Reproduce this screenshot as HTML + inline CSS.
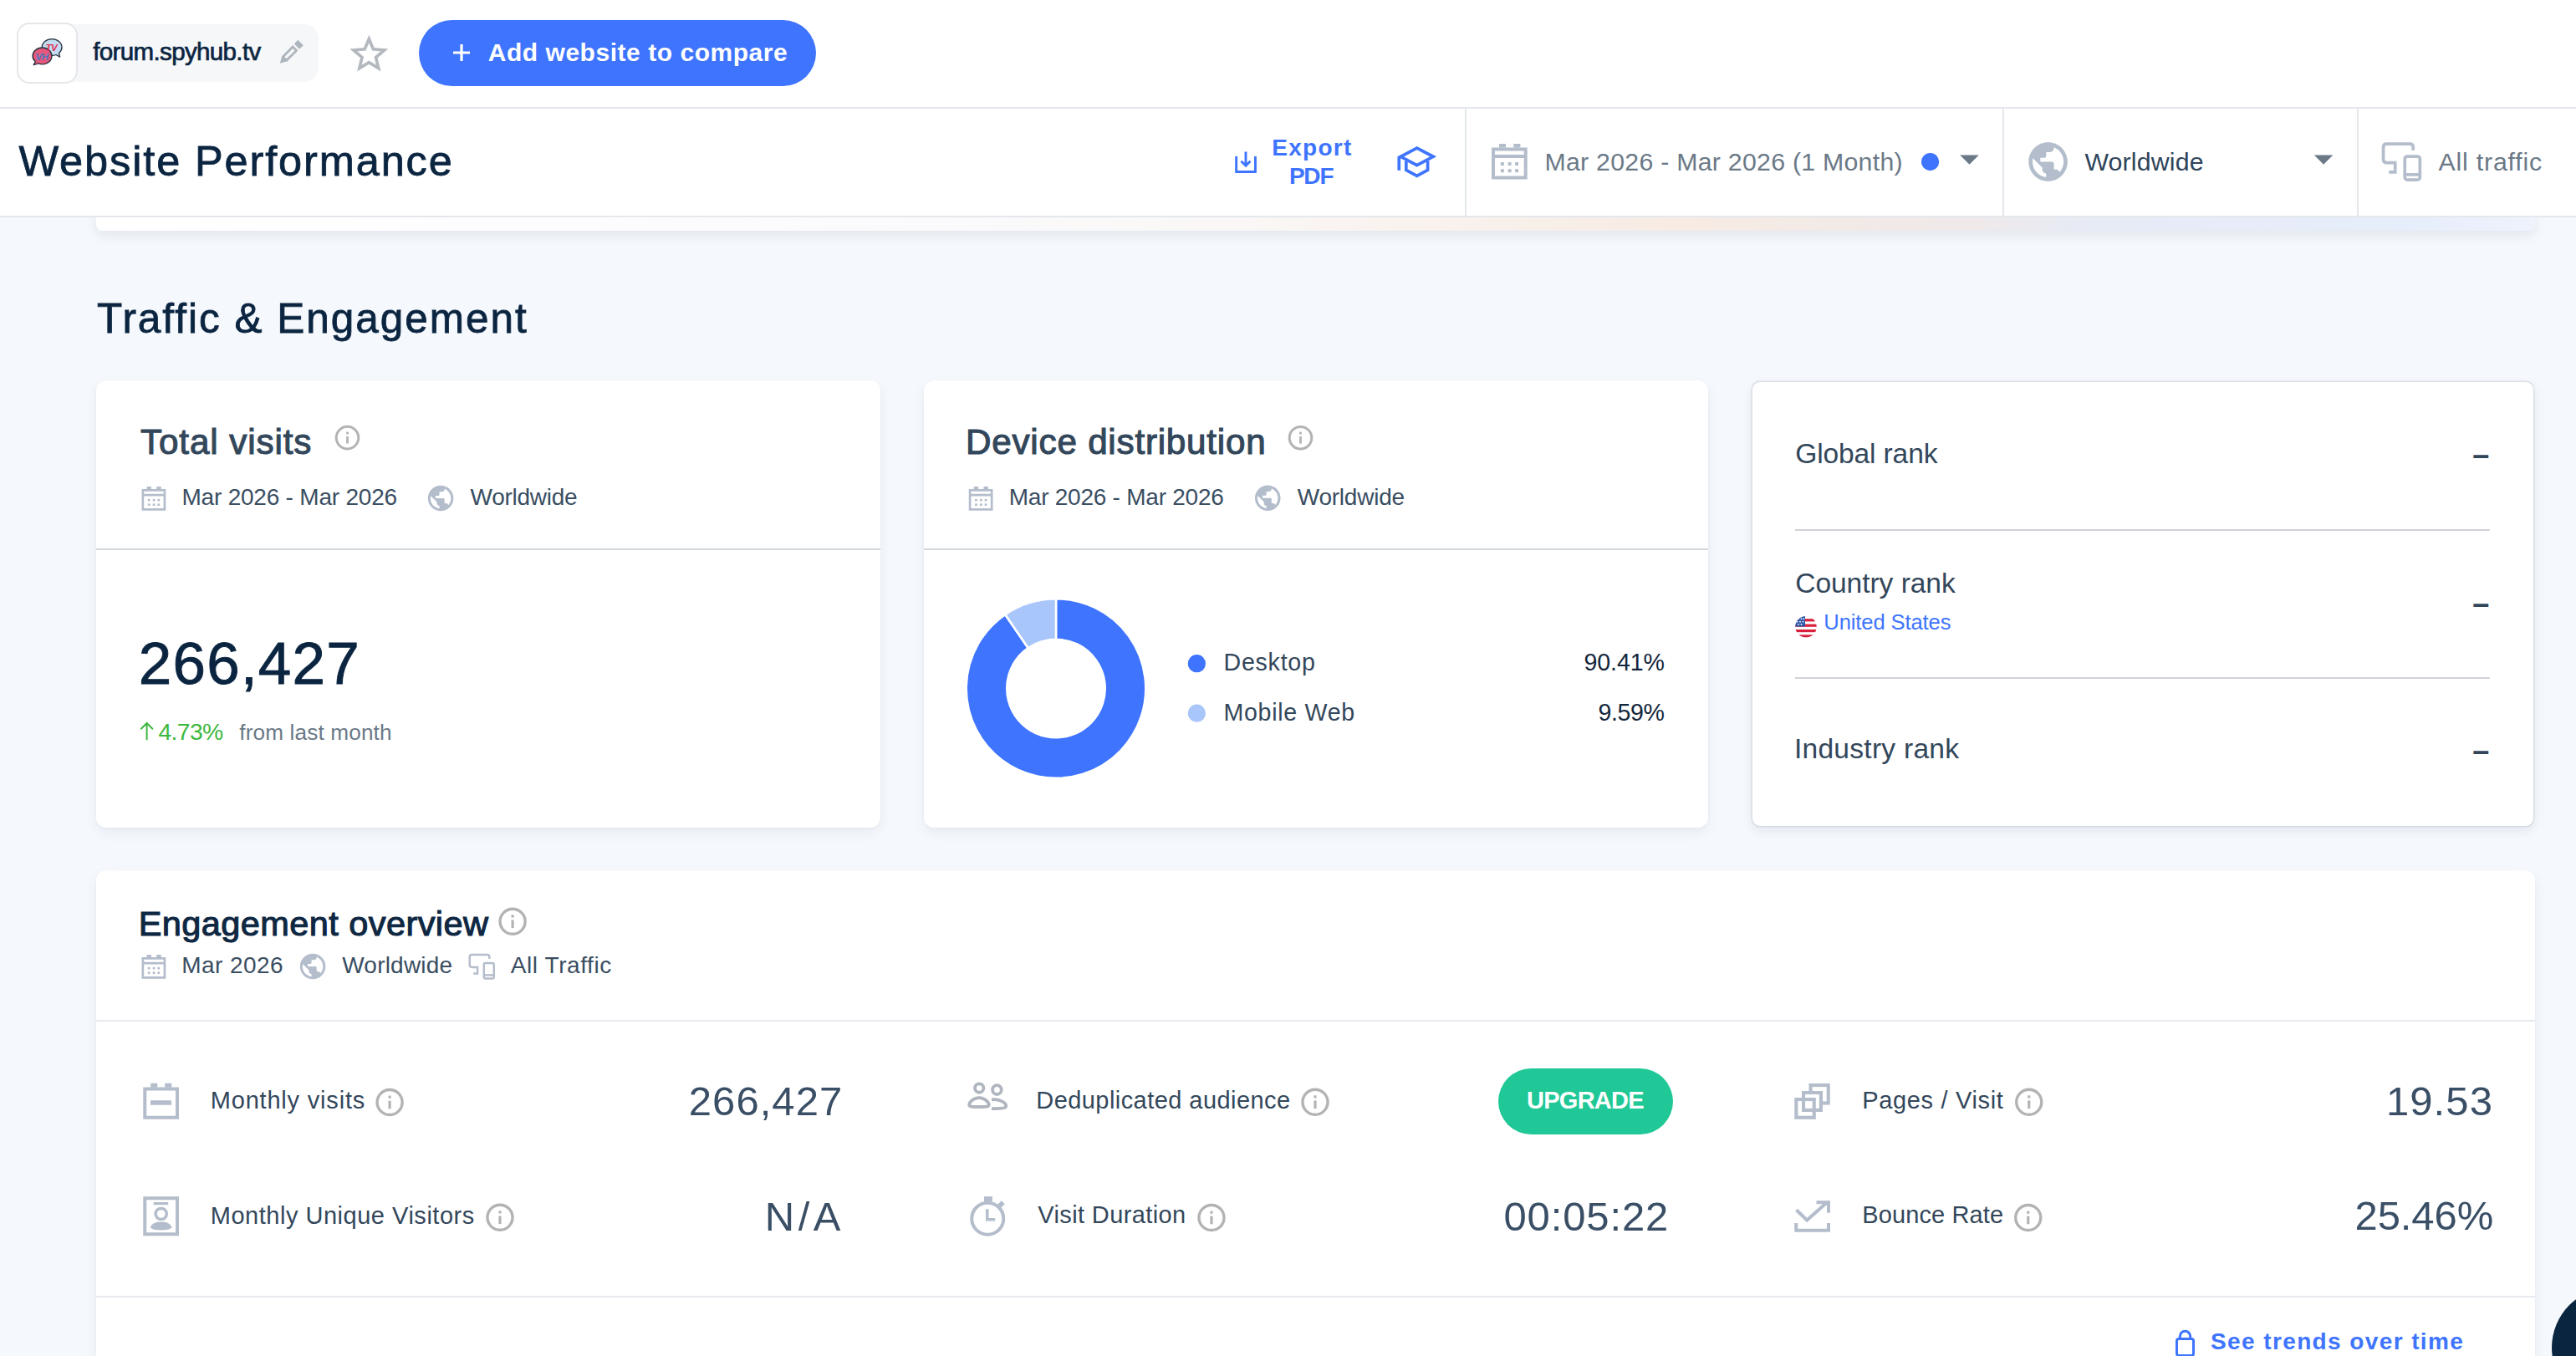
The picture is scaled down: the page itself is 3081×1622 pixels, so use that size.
<!DOCTYPE html>
<html lang="en"><head><meta charset="utf-8"><title>Website Performance - forum.spyhub.tv</title>
<style>
html,body{margin:0;padding:0;}
body{width:3081px;height:1622px;overflow:hidden;position:relative;background:#f5f8fc;font-family:"Liberation Sans",sans-serif;}
.t{position:absolute;white-space:nowrap;line-height:1;font-family:"Liberation Sans",sans-serif;}
.a{position:absolute;}
.card{position:absolute;background:#fff;border-radius:12px;box-shadow:0 6px 16px rgba(20,40,80,0.06),0 1px 3px rgba(20,40,80,0.04);}
svg{position:absolute;overflow:visible;}

</style></head>
<body>
<!-- top bars -->
<div class="a" style="left:0;top:0;width:3081px;height:128px;background:#fff;border-bottom:2px solid #e4e7eb;"></div>
<div class="a" style="left:115px;top:250px;width:2917px;height:26px;background:linear-gradient(90deg,#fff 0%,#fbfbfe 30%,#faf7f6 47%,#f7ebe3 65%,#efe9ea 77%,#e6ebf6 82%,#e6eefb 95%,#eef3fc 100%);border-radius:0 0 8px 8px;box-shadow:0 6px 14px rgba(20,40,80,0.08);"></div>
<div class="a" style="left:0;top:130px;width:3081px;height:128px;background:#fff;border-bottom:2px solid #e4e7eb;"></div>
<div class="a" style="left:1752px;top:130px;width:2px;height:128px;background:#e4e7eb;"></div>
<div class="a" style="left:2395px;top:130px;width:2px;height:128px;background:#e4e7eb;"></div>
<div class="a" style="left:2819px;top:130px;width:2px;height:128px;background:#e4e7eb;"></div>
<!-- site pill -->
<div class="a" style="left:21px;top:29.4px;width:360.2px;height:68.4px;background:#f6f7f9;border-radius:17px;"></div>
<div class="a" style="left:20.3px;top:27.2px;width:68.3px;height:68.6px;background:#fff;border:2px solid #e5e7ea;border-radius:15px;"></div>
<!-- add button -->
<div class="a" style="left:500.75px;top:23.75px;width:475.5px;height:78.75px;background:#3e74fe;border-radius:40px;"></div>
<!-- cards -->
<div class="card" style="left:114.5px;top:454.5px;width:938.5px;height:535px;"></div>
<div class="a" style="left:114.5px;top:656px;width:938.5px;height:2px;background:#d3d8de;"></div>
<div class="card" style="left:1104.5px;top:454.5px;width:938.5px;height:535px;"></div>
<div class="a" style="left:1104.5px;top:656px;width:938.5px;height:2px;background:#d3d8de;"></div>
<div class="a" style="left:2095.9px;top:457px;width:934.4px;height:531px;background:#fff;border-radius:9px;box-shadow:0 0 0 1.5px rgba(190,198,210,0.45),0 5px 14px rgba(20,40,80,0.09);"></div>
<div class="a" style="left:2147.2px;top:632.8px;width:830.8px;height:2px;background:#cfd3d8;"></div>
<div class="a" style="left:2147.2px;top:809.8px;width:830.8px;height:2px;background:#cfd3d8;"></div>
<div class="card" style="left:114.5px;top:1040.8px;width:2917.8px;height:640px;"></div>
<div class="a" style="left:114.5px;top:1219.7px;width:2917.8px;height:2px;background:#e6e9ed;"></div>
<div class="a" style="left:114.5px;top:1549.7px;width:2917.8px;height:2px;background:#e6e9ed;"></div>
<!-- upgrade -->
<div class="a" style="left:1791.75px;top:1278px;width:209px;height:78.75px;background:#1fc896;border-radius:40px;"></div>
<!-- chat bubble -->
<div class="a" style="left:3051.5px;top:1540px;width:144px;height:144px;background:#0a2540;border-radius:50%;"></div>

<svg width="3081" height="1622" viewBox="0 0 3081 1622" style="left:0;top:0;">

<!-- favicon -->
<g stroke="#24303f" stroke-width="1.300" stroke-linejoin="round">
  <path d="M62.100 46.700c6.600 0 11.900 4.400 11.900 9.900 0 2.700-1.300 5.100-3.400 6.900l1 4.600-4.600-2.600c-1.500.600-3.200.900-4.900.900-6.600 0-11.900-4.300-11.900-9.800s5.300-9.900 11.900-9.900z" fill="#c4dcef"/>
  <path d="M50.500 57c6.400 0 11.500 4.400 11.500 9.900s-5.100 9.900-11.500 9.900c-1.600 0-3.100-.300-4.500-.800l-5.800 1.700 2.100-4.100c-2-1.700-3.300-4.100-3.300-6.700 0-5.500 5.100-9.900 11.500-9.900z" fill="#e5587b"/>
</g>
<text x="54.500" y="61" font-family="Liberation Sans, sans-serif" font-weight="700" font-style="italic" font-size="11.500" fill="#e0315a" letter-spacing="-0.5">TV</text>
<text x="42.500" y="71.500" font-family="Liberation Sans, sans-serif" font-weight="700" font-style="italic" font-size="11.500" fill="#4a78c4" letter-spacing="-0.5">VH</text>

<!-- pencil -->
<g transform="translate(334.800,75.800) rotate(-45)" fill="#aeb6bd">
  <path d="M0 0L8 -4.500V4.500Z"/>
  <path fill-rule="evenodd" d="M7 -4.500H26.200V4.500H7Z M9.500 -1.700H23.400V1.700H9.500Z"/>
  <rect x="28.600" y="-4.500" width="6.400" height="9"/>
</g>
<!-- star -->
<path d="M441.30 46.50L446.41 58.86L459.75 59.91L449.57 68.59L452.70 81.59L441.30 74.60L429.90 81.59L433.03 68.59L422.85 59.91L436.19 58.86Z" fill="none" stroke="#b3b9bf" stroke-width="3.7" stroke-linejoin="miter" stroke-miterlimit="10"/>
<!-- plus -->
<path d="M542 63h20M552 53v20" stroke="#fff" stroke-width="3.200" fill="none"/>

<!-- export icon -->
<g stroke="#3e74fe" stroke-width="2.900" fill="none">
  <path d="M1478.650 187v18.550h22.800V187"/>
  <path d="M1490 181.400v17M1484.500 192.700l5.500 5.600 5.500-5.600"/>
</g>
<!-- grad cap -->
<g stroke="#3e74fe" stroke-width="3.700" fill="none" stroke-linejoin="miter">
  <path d="M1675.200 187.300L1694.700 177.100 1714.200 187.300 1694.700 197.700Z"/>
  <path d="M1681.800 192.500v11l12.900 6.800 12.900-6.800v-11"/>
  <path d="M1673.300 187.500v16.300"/>
</g>
<!-- header calendar -->
<g transform="translate(1784,172)" fill="#b4bdcb"><g>
    <path fill-rule="evenodd" d="M0 4.500h42.700v38.100H0z M4 8.500v4.500h34.700v-4.500z M4 17v21.600h34.700V17z"/>
    <rect x="9" y="0" width="8" height="4.600"/><rect x="26.300" y="0" width="8.100" height="4.600"/>
    <rect x="10.900" y="22" width="4" height="4"/><rect x="19.600" y="22" width="4" height="4"/><rect x="28.100" y="22" width="4" height="4"/>
    <rect x="10.900" y="30.200" width="4" height="4"/><rect x="19.600" y="30.200" width="4" height="4"/><rect x="28.100" y="30.200" width="4" height="4"/>
  </g></g>
<circle cx="2308.600" cy="193.600" r="10.600" fill="#3e74fe"/>
<g transform="translate(2344.250,185.500)" fill="#6b7987"><path d="M0 0h22.500l-11.250 11.250z"/></g>
<g transform="translate(2421.700,165.600) scale(2.325)" fill="#b4bdcb"><path d="M12 2C6.480 2 2 6.480 2 12s4.480 10 10 10 10-4.480 10-10S17.520 2 12 2zm-1 17.930c-3.950-.490-7-3.850-7-7.930 0-.620.080-1.210.210-1.790L9 15v1c0 1.100.900 2 2 2v1.930zm6.900-2.540c-.260-.810-1-1.390-1.900-1.390h-1v-3c0-.550-.450-1-1-1H8v-2h2c.550 0 1-.450 1-1V7h2c1.100 0 2-.900 2-2v-.410c2.930 1.190 5 4.060 5 7.410 0 2.080-.800 3.970-2.100 5.390z"/></g>
<g transform="translate(2767.800,185.500)" fill="#6b7987"><path d="M0 0h22.500l-11.250 11.250z"/></g>
<g transform="translate(2848.700,170.200)" stroke="#b4bdcb"><g fill="none" stroke-width="3.700">
    <path d="M37.500 9.500V5.800Q37.500 1.850 33.500 1.850H5.800Q1.850 1.850 1.850 5.800V20.500Q1.850 24.400 5.800 24.400H16V35.700H8.600"/>
    <rect x="27.550" y="16.850" width="18.100" height="28.100" rx="3"/>
    <path d="M27.500 38.700H45.600"/>
  </g></g>

<!-- card1 -->
<g transform="translate(415.500,523.600)"><g>
    <circle cx="0" cy="0" r="13.300" fill="none" stroke="#b2b3b5" stroke-width="3"/>
    <rect x="-1.400" y="-1.600" width="2.800" height="8.500" fill="#b2b3b5"/><rect x="-1.400" y="-7" width="2.800" height="2.800" fill="#b2b3b5"/>
  </g></g>
<g transform="translate(169.500,582) scale(0.674)" fill="#b4bdcb"><g>
    <path fill-rule="evenodd" d="M0 4.500h42.700v38.100H0z M4 8.500v4.500h34.700v-4.500z M4 17v21.600h34.700V17z"/>
    <rect x="9" y="0" width="8" height="4.600"/><rect x="26.300" y="0" width="8.100" height="4.600"/>
    <rect x="10.900" y="22" width="4" height="4"/><rect x="19.600" y="22" width="4" height="4"/><rect x="28.100" y="22" width="4" height="4"/>
    <rect x="10.900" y="30.200" width="4" height="4"/><rect x="19.600" y="30.200" width="4" height="4"/><rect x="28.100" y="30.200" width="4" height="4"/>
  </g></g>
<g transform="translate(508.740,577.640) scale(1.530)" fill="#b4bdcb"><path d="M12 2C6.480 2 2 6.480 2 12s4.480 10 10 10 10-4.480 10-10S17.520 2 12 2zm-1 17.930c-3.950-.490-7-3.850-7-7.930 0-.620.080-1.210.210-1.790L9 15v1c0 1.100.900 2 2 2v1.930zm6.900-2.540c-.260-.810-1-1.390-1.900-1.390h-1v-3c0-.550-.450-1-1-1H8v-2h2c.550 0 1-.450 1-1V7h2c1.100 0 2-.900 2-2v-.410c2.930 1.190 5 4.060 5 7.410 0 2.080-.800 3.970-2.100 5.390z"/></g>
<path d="M175.600 885.300V865M168.300 872.300l7.300-7.300 7.300 7.300" stroke="#3db83e" stroke-width="2" fill="none"/>

<!-- card2 -->
<g transform="translate(1555.500,523.700)"><g>
    <circle cx="0" cy="0" r="13.300" fill="none" stroke="#b2b3b5" stroke-width="3"/>
    <rect x="-1.400" y="-1.600" width="2.800" height="8.500" fill="#b2b3b5"/><rect x="-1.400" y="-7" width="2.800" height="2.800" fill="#b2b3b5"/>
  </g></g>
<g transform="translate(1158.750,582) scale(0.674)" fill="#b4bdcb"><g>
    <path fill-rule="evenodd" d="M0 4.500h42.700v38.100H0z M4 8.500v4.500h34.700v-4.500z M4 17v21.600h34.700V17z"/>
    <rect x="9" y="0" width="8" height="4.600"/><rect x="26.300" y="0" width="8.100" height="4.600"/>
    <rect x="10.900" y="22" width="4" height="4"/><rect x="19.600" y="22" width="4" height="4"/><rect x="28.100" y="22" width="4" height="4"/>
    <rect x="10.900" y="30.200" width="4" height="4"/><rect x="19.600" y="30.200" width="4" height="4"/><rect x="28.100" y="30.200" width="4" height="4"/>
  </g></g>
<g transform="translate(1497.890,577.400) scale(1.530)" fill="#b4bdcb"><path d="M12 2C6.480 2 2 6.480 2 12s4.480 10 10 10 10-4.480 10-10S17.520 2 12 2zm-1 17.930c-3.950-.490-7-3.850-7-7.930 0-.620.080-1.210.210-1.790L9 15v1c0 1.100.900 2 2 2v1.930zm6.900-2.540c-.260-.810-1-1.390-1.900-1.390h-1v-3c0-.550-.450-1-1-1H8v-2h2c.550 0 1-.450 1-1V7h2c1.100 0 2-.900 2-2v-.410c2.930 1.190 5 4.060 5 7.410 0 2.080-.800 3.970-2.100 5.390z"/></g>
<path d="M1263.00 716.20A107.3 107.3 0 1 1 1202.19 735.10L1229.73 775.14A58.7 58.7 0 1 0 1263.00 764.80Z" fill="#3e74fe" stroke="#fff" stroke-width="2.6" stroke-linejoin="round"/>
<path d="M1202.19 735.10A107.3 107.3 0 0 1 1263.00 716.20L1263.00 764.80A58.7 58.7 0 0 0 1229.73 775.14Z" fill="#a9c6fb" stroke="#fff" stroke-width="2.6" stroke-linejoin="round"/>
<circle cx="1431.400" cy="793.700" r="10.600" fill="#3e74fe"/>
<circle cx="1431.400" cy="853.200" r="10.600" fill="#a9c6fb"/>

<!-- flag -->
<g transform="translate(2160,749.700)">
  <clipPath id="fc"><circle cx="0" cy="0" r="12.700"/></clipPath>
  <g clip-path="url(#fc)">
    <rect x="-13" y="-13" width="26" height="26" fill="#fff"/>
    <rect x="-13" y="-9.500" width="26" height="3.200" fill="#d8213c"/>
    <rect x="-13" y="-3.100" width="26" height="3.200" fill="#d8213c"/>
    <rect x="-13" y="3.300" width="26" height="3.200" fill="#d8213c"/>
    <rect x="-13" y="9.600" width="26" height="3.400" fill="#d8213c"/>
    <rect x="-13" y="-13" width="12" height="12.800" fill="#2f57a8"/>
    <g fill="#fff"><circle cx="-9" cy="-9.500" r="0.900"/><circle cx="-5.500" cy="-9.500" r="0.900"/><circle cx="-2.500" cy="-9.500" r="0.900"/><circle cx="-10.500" cy="-6" r="0.900"/><circle cx="-7" cy="-6" r="0.900"/><circle cx="-3.500" cy="-6" r="0.900"/><circle cx="-9" cy="-2.800" r="0.900"/><circle cx="-5.500" cy="-2.800" r="0.900"/></g>
  </g>
</g>

<!-- engagement header -->
<g transform="translate(613.100,1102.250) scale(1.130)"><g>
    <circle cx="0" cy="0" r="13.300" fill="none" stroke="#b2b3b5" stroke-width="3"/>
    <rect x="-1.400" y="-1.600" width="2.800" height="8.500" fill="#b2b3b5"/><rect x="-1.400" y="-7" width="2.800" height="2.800" fill="#b2b3b5"/>
  </g></g>
<g transform="translate(169.500,1142) scale(0.674)" fill="#b4bdcb"><g>
    <path fill-rule="evenodd" d="M0 4.500h42.700v38.100H0z M4 8.500v4.500h34.700v-4.500z M4 17v21.600h34.700V17z"/>
    <rect x="9" y="0" width="8" height="4.600"/><rect x="26.300" y="0" width="8.100" height="4.600"/>
    <rect x="10.900" y="22" width="4" height="4"/><rect x="19.600" y="22" width="4" height="4"/><rect x="28.100" y="22" width="4" height="4"/>
    <rect x="10.900" y="30.200" width="4" height="4"/><rect x="19.600" y="30.200" width="4" height="4"/><rect x="28.100" y="30.200" width="4" height="4"/>
  </g></g>
<g transform="translate(355.740,1137.640) scale(1.530)" fill="#b4bdcb"><path d="M12 2C6.480 2 2 6.480 2 12s4.480 10 10 10 10-4.480 10-10S17.520 2 12 2zm-1 17.930c-3.950-.490-7-3.850-7-7.930 0-.620.080-1.210.210-1.790L9 15v1c0 1.100.900 2 2 2v1.930zm6.900-2.540c-.260-.810-1-1.390-1.900-1.390h-1v-3c0-.550-.450-1-1-1H8v-2h2c.550 0 1-.450 1-1V7h2c1.100 0 2-.900 2-2v-.410c2.930 1.190 5 4.060 5 7.410 0 2.080-.800 3.970-2.100 5.390z"/></g>
<g transform="translate(560.500,1140.750) scale(0.663)" stroke="#b4bdcb"><g fill="none" stroke-width="3.700">
    <path d="M37.500 9.500V5.800Q37.500 1.850 33.500 1.850H5.800Q1.850 1.850 1.850 5.800V20.500Q1.850 24.400 5.800 24.400H16V35.700H8.600"/>
    <rect x="27.550" y="16.850" width="18.100" height="28.100" rx="3"/>
    <path d="M27.500 38.700H45.600"/>
  </g></g>

<!-- row icons -->
<g fill="none" stroke="#b4bdcb" stroke-width="4">
  <!-- monthly visits -->
  <rect x="173.250" y="1302.500" width="38.750" height="34.250"/>
  <path d="M180 1319h25" stroke-width="5.500"/>
  <path d="M184.250 1295.750v5M201.250 1295.750v5" stroke-width="8"/>
  <!-- unique visitors -->
  <rect x="173.250" y="1433.250" width="38.750" height="43"/>
  <path d="M183.750 1439.600h17.500" stroke-width="3.200"/>
  <circle cx="192.700" cy="1452" r="6.600" stroke-width="3.500"/>
  <path d="M181.500 1467.800c1.500-3.300 5.500-4.800 11.200-4.800s9.700 1.500 11.200 4.800c-2 1.500-6 2.200-11.200 2.200s-9.200-.700-11.200-2.200z" stroke-width="3" fill="#b4bdcb"/>
  <!-- pages -->
  <rect x="2165.550" y="1298.050" width="21.200" height="21.400" stroke-width="4.100"/>
  <rect x="2157.050" y="1307.050" width="20.900" height="20.900" stroke-width="4.100" fill="#fff"/>
  <rect x="2148.350" y="1315.050" width="21.400" height="21.700" stroke-width="4.100"/>
  <!-- bounce -->
  <path d="M2148.250 1463v8.750h38.750V1463"/>
  <path d="M2148.500 1447.200l12.700 12.300 24.300-21.500" />
  <path d="M2172.500 1438.250h14.500v12.500"/>
</g>
<!-- people -->
<g fill="none" stroke="#b0b6bf" stroke-width="3.800">
  <circle cx="1171.200" cy="1301.600" r="5.200"/>
  <circle cx="1192.400" cy="1303.600" r="5.400"/>
  <path d="M1171 1313.200C1164 1313.200 1159.200 1318.500 1159.200 1321.800C1159.200 1323.600 1162 1324 1171 1324C1180 1324 1182.800 1323.600 1182.800 1321.800C1182.800 1318.500 1178 1313.200 1171 1313.200Z"/>
  <path d="M1186 1315.300C1196 1314.500 1203.300 1319 1203.300 1323C1203.300 1325.500 1199 1326 1186 1326.200"/>
</g>
<!-- clock -->
<g fill="none" stroke="#b4bdcb" stroke-width="4">
  <circle cx="1181.250" cy="1457.700" r="19"/>
  <path d="M1177 1434.200h10" stroke-width="6"/>
  <path d="M1195.500 1438.500l4 4" stroke-width="6.500"/>
  <path d="M1180.750 1446.250v12.500h9.500" stroke-width="3.500"/>
</g>
<!-- info icons rows -->
<g transform="translate(466.100,1318.500) scale(1.130)"><g>
    <circle cx="0" cy="0" r="13.300" fill="none" stroke="#b2b3b5" stroke-width="3"/>
    <rect x="-1.400" y="-1.600" width="2.800" height="8.500" fill="#b2b3b5"/><rect x="-1.400" y="-7" width="2.800" height="2.800" fill="#b2b3b5"/>
  </g></g>
<g transform="translate(598,1456.250) scale(1.130)"><g>
    <circle cx="0" cy="0" r="13.300" fill="none" stroke="#b2b3b5" stroke-width="3"/>
    <rect x="-1.400" y="-1.600" width="2.800" height="8.500" fill="#b2b3b5"/><rect x="-1.400" y="-7" width="2.800" height="2.800" fill="#b2b3b5"/>
  </g></g>
<g transform="translate(1573,1318.250) scale(1.130)"><g>
    <circle cx="0" cy="0" r="13.300" fill="none" stroke="#b2b3b5" stroke-width="3"/>
    <rect x="-1.400" y="-1.600" width="2.800" height="8.500" fill="#b2b3b5"/><rect x="-1.400" y="-7" width="2.800" height="2.800" fill="#b2b3b5"/>
  </g></g>
<g transform="translate(1449,1456.500) scale(1.130)"><g>
    <circle cx="0" cy="0" r="13.300" fill="none" stroke="#b2b3b5" stroke-width="3"/>
    <rect x="-1.400" y="-1.600" width="2.800" height="8.500" fill="#b2b3b5"/><rect x="-1.400" y="-7" width="2.800" height="2.800" fill="#b2b3b5"/>
  </g></g>
<g transform="translate(2426.750,1318.250) scale(1.130)"><g>
    <circle cx="0" cy="0" r="13.300" fill="none" stroke="#b2b3b5" stroke-width="3"/>
    <rect x="-1.400" y="-1.600" width="2.800" height="8.500" fill="#b2b3b5"/><rect x="-1.400" y="-7" width="2.800" height="2.800" fill="#b2b3b5"/>
  </g></g>
<g transform="translate(2425.750,1456.500) scale(1.130)"><g>
    <circle cx="0" cy="0" r="13.300" fill="none" stroke="#b2b3b5" stroke-width="3"/>
    <rect x="-1.400" y="-1.600" width="2.800" height="8.500" fill="#b2b3b5"/><rect x="-1.400" y="-7" width="2.800" height="2.800" fill="#b2b3b5"/>
  </g></g>
<!-- lock -->
<g fill="none" stroke="#3e74fe" stroke-width="3">
  <rect x="2603.500" y="1601.500" width="20" height="20" rx="2.500"/>
  <path d="M2607.300 1601.500v-3a6.200 6.200 0 0 1 12.400 0v3"/>
</g>
</svg>

<div class="t" style="left:111.25px;top:47.02px;font-size:29.5px;color:#0b2541;letter-spacing:-0.634px;-webkit-text-stroke:0.7px #0b2541;">forum.spyhub.tv</div>
<div class="t" style="left:583.75px;top:48.00px;font-size:30px;color:#ffffff;letter-spacing:0.534px;font-weight:700;">Add website to compare</div>
<div class="t" style="left:22.50px;top:168.49px;font-size:50.5px;color:#0b2541;letter-spacing:1.872px;-webkit-text-stroke:0.8px #0b2541;">Website Performance</div>
<div class="t" style="left:1521.30px;top:162.69px;font-size:28px;color:#3e74fe;letter-spacing:1.270px;font-weight:700;">Export</div>
<div class="t" style="left:1541.90px;top:196.79px;font-size:28px;color:#3e74fe;letter-spacing:-1.198px;font-weight:700;">PDF</div>
<div class="t" style="left:1847.50px;top:178.84px;font-size:30.3px;color:#6b7987;letter-spacing:0.254px;">Mar 2026 - Mar 2026 (1 Month)</div>
<div class="t" style="left:2493.40px;top:178.54px;font-size:30.3px;color:#2f4459;letter-spacing:0.159px;">Worldwide</div>
<div class="t" style="left:2916.50px;top:178.54px;font-size:30.3px;color:#6b7987;letter-spacing:0.804px;">All traffic</div>
<div class="t" style="left:116.00px;top:356.34px;font-size:49.5px;color:#0b2541;letter-spacing:1.987px;-webkit-text-stroke:0.8px #0b2541;">Traffic &amp; Engagement</div>
<div class="t" style="left:168.00px;top:507.67px;font-size:42.2px;color:#33475b;letter-spacing:0.888px;-webkit-text-stroke:1.1px #33475b;">Total visits</div>
<div class="t" style="left:217.50px;top:581.29px;font-size:28px;color:#3a4e62;letter-spacing:-0.216px;">Mar 2026 - Mar 2026</div>
<div class="t" style="left:562.50px;top:581.29px;font-size:28px;color:#3a4e62;letter-spacing:-0.266px;">Worldwide</div>
<div class="t" style="left:165.75px;top:757.88px;font-size:71px;color:#0b2541;letter-spacing:1.223px;-webkit-text-stroke:0.9px #0b2541;">266,427</div>
<div class="t" style="left:189.50px;top:860.74px;font-size:28.3px;color:#3db83e;letter-spacing:-0.643px;">4.73%</div>
<div class="t" style="left:286.25px;top:862.52px;font-size:26.2px;color:#6b7987;letter-spacing:0.132px;">from last month</div>
<div class="t" style="left:1155.00px;top:507.87px;font-size:42.2px;color:#33475b;letter-spacing:0.779px;-webkit-text-stroke:1.1px #33475b;">Device distribution</div>
<div class="t" style="left:1206.75px;top:581.29px;font-size:28px;color:#3a4e62;letter-spacing:-0.244px;">Mar 2026 - Mar 2026</div>
<div class="t" style="left:1551.75px;top:581.29px;font-size:28px;color:#3a4e62;letter-spacing:-0.234px;">Worldwide</div>
<div class="t" style="left:1463.50px;top:778.28px;font-size:28.6px;color:#33475b;letter-spacing:0.751px;">Desktop</div>
<div class="t" style="left:1894.50px;top:778.28px;font-size:28.6px;color:#14263b;letter-spacing:-0.111px;">90.41%</div>
<div class="t" style="left:1463.50px;top:837.78px;font-size:28.6px;color:#33475b;letter-spacing:0.689px;">Mobile Web</div>
<div class="t" style="left:1911.50px;top:837.78px;font-size:28.6px;color:#14263b;letter-spacing:-0.413px;">9.59%</div>
<div class="t" style="left:2147.20px;top:526.35px;font-size:33.6px;color:#33475b;letter-spacing:-0.142px;">Global rank</div>
<div class="t" style="left:2147.20px;top:680.55px;font-size:33.6px;color:#33475b;letter-spacing:-0.058px;">Country rank</div>
<div class="t" style="left:2181.30px;top:732.22px;font-size:25.6px;color:#3e74fe;letter-spacing:-0.121px;">United States</div>
<div class="t" style="left:2145.90px;top:879.45px;font-size:33.6px;color:#33475b;letter-spacing:0.258px;">Industry rank</div>
<div class="t" style="left:165.75px;top:1084.36px;font-size:41.5px;color:#0e2742;letter-spacing:0.422px;-webkit-text-stroke:1.1px #0e2742;">Engagement overview</div>
<div class="t" style="left:217.25px;top:1141.29px;font-size:28px;color:#3a4e62;letter-spacing:0.433px;">Mar 2026</div>
<div class="t" style="left:409.25px;top:1141.29px;font-size:28px;color:#3a4e62;letter-spacing:0.203px;">Worldwide</div>
<div class="t" style="left:610.75px;top:1141.29px;font-size:28px;color:#3a4e62;letter-spacing:0.587px;">All Traffic</div>
<div class="t" style="left:251.75px;top:1302.45px;font-size:29px;color:#33475b;letter-spacing:0.804px;">Monthly visits</div>
<div class="t" style="left:823.75px;top:1293.01px;font-size:49px;color:#3a4f66;letter-spacing:1.063px;">266,427</div>
<div class="t" style="left:251.75px;top:1439.70px;font-size:29px;color:#33475b;letter-spacing:0.518px;">Monthly Unique Visitors</div>
<div class="t" style="left:914.75px;top:1430.51px;font-size:49px;color:#3a4f66;letter-spacing:4.500px;">N/A</div>
<div class="t" style="left:1239.25px;top:1302.45px;font-size:29px;color:#33475b;letter-spacing:0.441px;">Deduplicated audience</div>
<div class="t" style="left:1826.00px;top:1302.45px;font-size:29px;color:#ffffff;letter-spacing:-0.737px;font-weight:700;">UPGRADE</div>
<div class="t" style="left:1241.25px;top:1439.20px;font-size:29px;color:#33475b;letter-spacing:0.380px;">Visit Duration</div>
<div class="t" style="left:1798.50px;top:1430.51px;font-size:49px;color:#3a4f66;letter-spacing:0.859px;">00:05:22</div>
<div class="t" style="left:2227.25px;top:1302.45px;font-size:29px;color:#33475b;letter-spacing:0.658px;">Pages / Visit</div>
<div class="t" style="left:2853.90px;top:1292.81px;font-size:49px;color:#3a4f66;letter-spacing:1.108px;">19.53</div>
<div class="t" style="left:2227.25px;top:1439.20px;font-size:29px;color:#33475b;letter-spacing:0.121px;">Bounce Rate</div>
<div class="t" style="left:2816.50px;top:1430.21px;font-size:49px;color:#3a4f66;letter-spacing:-0.084px;">25.46%</div>
<div class="t" style="left:2644.00px;top:1591.29px;font-size:28px;color:#3e74fe;letter-spacing:1.391px;font-weight:700;">See trends over time</div>
<div class="t" style="left:2957.20px;top:525.62px;font-size:36px;color:#33475b;font-weight:700;">–</div>
<div class="t" style="left:2957.20px;top:703.62px;font-size:36px;color:#33475b;font-weight:700;">–</div>
<div class="t" style="left:2957.20px;top:880.42px;font-size:36px;color:#33475b;font-weight:700;">–</div>
</body></html>
